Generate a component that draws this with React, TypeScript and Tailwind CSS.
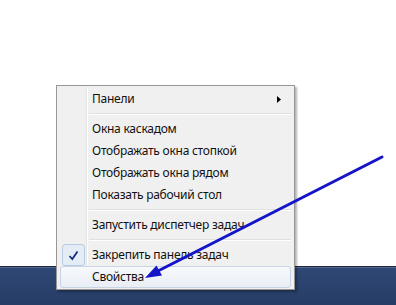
import React from "react";

const font = { fontFamily: '"Noto Sans", "Open Sans", sans-serif' };

function Item({ label, sub, checked, hot }: { label: string; sub?: boolean; checked?: boolean; hot?: boolean }) {
  return (
    <div className="relative flex h-[22px] items-center">
      {hot && (
        <div className="absolute inset-x-[1px] inset-y-0 rounded-[3px] border border-[#c7d4e4] bg-gradient-to-b from-[#f7f9fc] to-[#e9eef5]" />
      )}
      <div className="relative flex h-[22px] w-[27px] shrink-0 items-center justify-center">
        {checked && (
          <div className="ml-[2px] flex h-[22px] w-[23px] items-center justify-center rounded-[3px] border border-[#b8cce2] bg-[#e4ecf6]">
            <svg width="11" height="11" viewBox="0 0 11 11">
              <path d="M1.5 6 L4.3 9 L9.5 1.5" fill="none" stroke="#1c2c80" strokeWidth="1.8" />
            </svg>
          </div>
        )}
      </div>
      <div className="relative flex-1 pl-[6px] text-[12px] leading-none tracking-[-0.25px] text-[#111]">{label}</div>
      {sub && (
        <svg className="relative mr-[11px]" width="4" height="7" viewBox="0 0 4 7">
          <path d="M0 0 L4 3.5 L0 7 Z" fill="#000" />
        </svg>
      )}
    </div>
  );
}

function Sep() {
  return (
    <div className="flex h-[8px] flex-col justify-center pl-[30px] pr-[1px]">
      <div className="h-px bg-[#e0e0e0]" />
      <div className="h-px bg-white" />
    </div>
  );
}

export default function App() {
  return (
    <div className="relative h-[305px] w-[396px] overflow-hidden bg-white" style={font}>
      <div className="flex h-full flex-col">
        <div className="h-[266px] bg-white" />
        <div className="h-px bg-[#1b2740]" />
        <div className="h-px bg-[#55698e]" />
        <div className="flex-1 bg-gradient-to-b from-[#2f4774] to-[#263d66]" />
      </div>

      <div className="absolute left-[56px] top-[85px] w-[239px] border border-[#979797] bg-[#f0f0f0] pb-[1px] pl-[2px] pr-[2px] pt-[2px] shadow-[2px_2px_2px_rgba(0,0,0,0.3)]">
        <div className="absolute bottom-[1px] left-[29px] top-[1px] w-px bg-[#e2e3e3]" />
        <div className="absolute bottom-[1px] left-[30px] top-[1px] w-px bg-white" />
        <Item label="Панели" sub />
        <Sep />
        <Item label="Окна каскадом" />
        <Item label="Отображать окна стопкой" />
        <Item label="Отображать окна рядом" />
        <Item label="Показать рабочий стол" />
        <Sep />
        <Item label="Запустить диспетчер задач" />
        <Sep />
        <Item label="Закрепить панель задач" checked />
        <Item label="Свойства" hot />
      </div>

      <svg className="absolute left-0 top-0" width="396" height="305" viewBox="0 0 396 305">
        <line x1="382" y1="157" x2="156" y2="272" stroke="#1414c8" strokeWidth="3" strokeLinecap="round" />
        <path d="M145 278 L162 275.5 L156.5 265.5 Z" fill="#1414c8" />
      </svg>
    </div>
  );
}
